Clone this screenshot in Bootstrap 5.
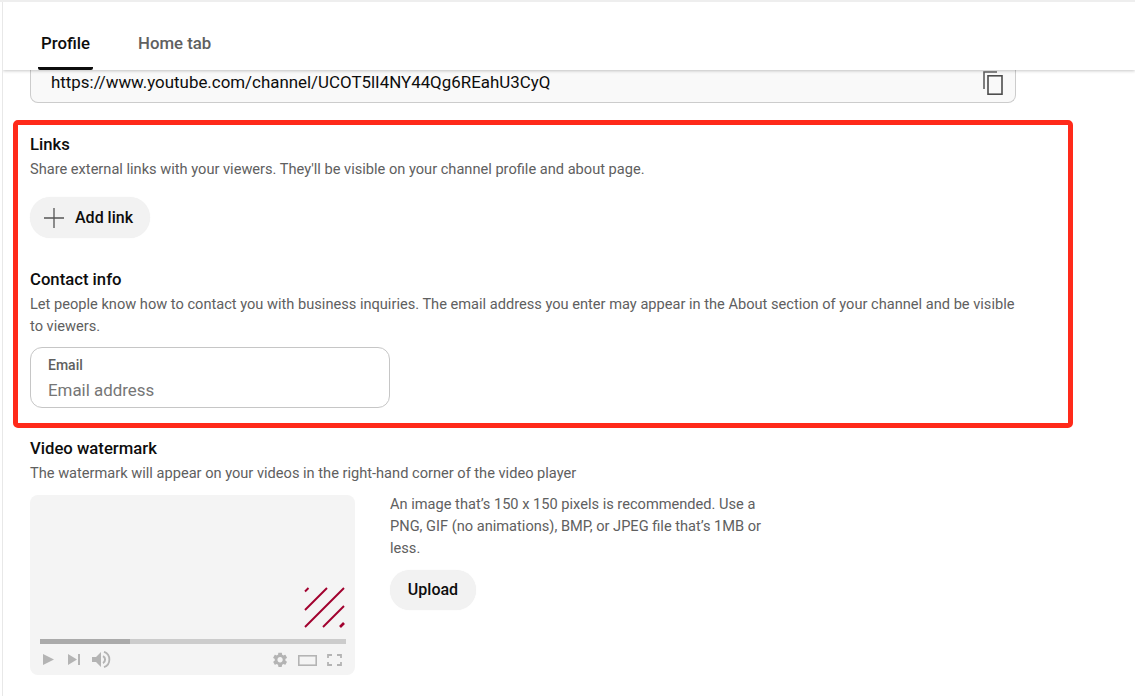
<!DOCTYPE html>
<html lang="en">
<head>
<meta charset="utf-8">
<title>Profile</title>
<link href="https://cdn.jsdelivr.net/npm/bootstrap@5.3.0/dist/css/bootstrap.min.css" rel="stylesheet">
<style>
html,body{height:696px;overflow:hidden;background:#fff}
body{font-family:Roboto,"Liberation Sans",sans-serif;color:#0d0d0d}
.yt-page{height:696px;overflow:hidden;border-top:2px solid #eee;padding-left:2px}
.yt-edge{border-left:1px solid #e8e8e8;height:694px;overflow:hidden}
.yt-tabs{height:68px;padding-left:35px;gap:42px;box-shadow:0 1px 3px rgba(0,0,0,.22);background:#fff;position:relative;z-index:2}
.yt-tab{font-size:16.8px;font-weight:500;color:#606060;height:68px;line-height:20px;padding:14px 3px 0;background:none;border:0}
.yt-tab.is-on{color:#0d0d0d;border-bottom:3px solid #0d0d0d;border-radius:0 0 2px 2px;padding-top:16px}
.yt-url{margin-left:27px;width:986px;height:33px;background:#f9f9f9;border:1px solid #ccc;border-top:0;border-radius:0 0 8px 8px;padding:0 12px 0 20px;font-size:16.9px;line-height:24px;color:#0d0d0d}
.yt-url svg{margin-top:1px}
.yt-redbox{margin:17px 0 0 10px;width:1060px;height:308px;border:5px solid #ff2a1a;border-radius:5px;padding:9px 12px 0}
.yt-h{font-size:16.7px;font-weight:500;line-height:22px;color:#0d0d0d;margin:0}
.yt-p{font-size:14.62px;line-height:22px;color:#606060;margin:2px 0 0}
.yt-wide{width:990px}
.yt-pill{height:41px;border-radius:21px;background:#f2f2f2;border:0;font-size:16px;font-weight:500;color:#0d0d0d;box-shadow:0 0 1px rgba(0,0,0,.08)}
.yt-add{width:120px;padding:0 0 0 12px;gap:9px;margin-top:17px}
.yt-contact{margin-top:31px}
.yt-field{width:360px;height:61px;border:1px solid #c6c6c6;border-radius:12px;margin-top:10px;padding:9px 17px}
.yt-field label{display:block;font-size:14px;font-weight:500;line-height:16px;color:#606060;margin:0}
.yt-field input{display:block;width:100%;border:0;outline:0;padding:0;margin-top:5px;font-size:16.9px;line-height:24px;height:24px;font-family:inherit;background:transparent}
.yt-field input::placeholder{color:#767676;opacity:1}
.yt-water{padding-left:27px;margin-top:10px}
.yt-row{margin-top:9px}
.yt-player{width:325px;height:180px;background:#f4f4f4;border-radius:8px;padding:0 9px 0 10px;margin-top:2px}
.yt-mark{height:144px;padding-bottom:11px;padding-right:1px}
.yt-track{height:5px;background:#ccc}
.yt-track-fill{height:5px;background:#aaa}
.yt-ctrl{margin-top:7px}
.yt-side{width:410px;padding-left:35px}
.yt-side p{font-size:14.62px;line-height:22px;color:#606060;margin:0}
.yt-upload{width:86px;height:40px;margin-top:11px;padding:0}
</style>
</head>
<body>
<div class="yt-page"><div class="yt-edge">
  <div class="d-flex align-items-start yt-tabs">
    <button class="yt-tab is-on" type="button">Profile</button>
    <button class="yt-tab" type="button">Home tab</button>
  </div>
  <div class="yt-url d-flex justify-content-between">
    <span>https://www.youtube.com/channel/UCOT5lI4NY44Qg6REahU3CyQ</span>
    <svg width="20" height="24" viewBox="0 0 20 24" aria-hidden="true"><path d="M1 18V1h13" fill="none" stroke="#606060" stroke-width="1.6"/><rect x="5" y="4.8" width="14" height="18.4" fill="none" stroke="#4d4d4d" stroke-width="1.6"/></svg>
  </div>

  <section class="yt-redbox">
    <h2 class="yt-h">Links</h2>
    <p class="yt-p">Share external links with your viewers. They'll be visible on your channel profile and about page.</p>
    <button class="yt-pill yt-add d-flex align-items-center" type="button">
      <svg width="24" height="24" viewBox="0 0 24 24" aria-hidden="true"><path d="M12 2v20M2 12h20" stroke="#555" stroke-width="1.3" fill="none"/></svg>
      <span>Add link</span>
    </button>
    <h2 class="yt-h yt-contact">Contact info</h2>
    <p class="yt-p yt-wide">Let people know how to contact you with business inquiries. The email address you enter may appear in the About section of your channel and be visible to viewers.</p>
    <div class="yt-field">
      <label for="mail">Email</label>
      <input id="mail" type="text" placeholder="Email address">
    </div>
  </section>

  <div class="yt-water">
    <h2 class="yt-h">Video watermark</h2>
    <p class="yt-p">The watermark will appear on your videos in the right-hand corner of the video player</p>
    <div class="d-flex yt-row">
      <div class="yt-player flex-shrink-0">
        <div class="yt-mark d-flex justify-content-end align-items-end">
          <svg width="41" height="41" viewBox="0 0 41 41" aria-hidden="true"><g stroke="#a1002e" stroke-width="1.9" fill="none"><path d="M1 4.500 4.500 1"/><path d="M1 23 23 1"/><path d="M1 40 40 1"/><path d="M19 40 40 19"/><path d="M36 40 40 36" stroke-width="2.600"/></g></svg>
        </div>
        <div class="yt-track"><div class="yt-track-fill" style="width:90px"></div></div>
        <div class="yt-ctrl">
          <svg class="d-block" width="306" height="20" viewBox="0 0 306 20" aria-hidden="true">
            <path d="M3 3 14 8.500 3 14Z" fill="#b4b4b4"/>
            <path d="M28 3 37 8.500 28 14Z M38 3h2v11h-2Z" fill="#b4b4b4"/>
            <path d="M52 6h4l5-5v15l-5-5h-4Z" fill="#b4b4b4"/>
            <path d="M63 5a4 4 0 0 1 0 7" stroke="#b4b4b4" stroke-width="2" fill="none"/>
            <path d="M64 0.800a8.200 8.200 0 0 1 0 15.400" stroke="#b4b4b4" stroke-width="1.800" fill="none"/>
            <path transform="translate(231.200 -0.100) scale(.74)" fill="#b4b4b4" d="M19.14,12.94c0.04-0.3,0.06-0.61,0.06-0.94c0-0.32-0.02-0.64-0.07-0.94l2.03-1.58c0.18-0.14,0.23-0.41,0.12-0.61l-1.92-3.32c-0.12-0.22-0.37-0.29-0.59-0.22l-2.39,0.96c-0.5-0.38-1.03-0.7-1.62-0.94L14.4,2.81c-0.04-0.24-0.24-0.41-0.48-0.41h-3.84c-0.24,0-0.43,0.17-0.47,0.41L9.25,5.35C8.66,5.59,8.12,5.92,7.63,6.29L5.24,5.33c-0.22-0.08-0.47,0-0.59,0.22L2.74,8.87C2.62,9.08,2.66,9.34,2.86,9.48l2.03,1.58C4.84,11.36,4.8,11.69,4.8,12s0.02,0.64,0.07,0.94l-2.03,1.58c-0.18,0.14-0.23,0.41-0.12,0.61l1.92,3.32c0.12,0.22,0.37,0.29,0.59,0.22l2.39-0.96c0.5,0.38,1.03,0.7,1.62,0.94l0.36,2.54c0.05,0.24,0.24,0.41,0.48,0.41h3.84c0.24,0,0.44-0.17,0.47-0.41l0.36-2.54c0.59-0.24,1.13-0.56,1.62-0.94l2.39,0.96c0.22,0.08,0.47,0,0.59-0.22l1.92-3.32c0.12-0.22,0.07-0.47-0.12-0.61L19.14,12.94z M12,15.6c-1.98,0-3.6-1.62-3.6-3.6s1.62-3.6,3.6-3.6s3.6,1.62,3.6,3.6S13.98,15.6,12,15.6z"/>
            <rect x="258.800" y="4.800" width="17.400" height="9.400" fill="none" stroke="#b4b4b4" stroke-width="1.600"/>
            <path d="M288 7V4h4M297 4h4v3M288 11v3h4M297 14h4v-3" fill="none" stroke="#b4b4b4" stroke-width="1.800"/>
          </svg>
        </div>
      </div>
      <div class="yt-side">
        <p>An image that’s 150 x 150 pixels is recommended. Use a PNG, GIF (no animations), BMP, or JPEG file that’s 1MB or less.</p>
        <button class="yt-pill yt-upload" type="button">Upload</button>
      </div>
    </div>
  </div>
</div></div>
</body>
</html>
